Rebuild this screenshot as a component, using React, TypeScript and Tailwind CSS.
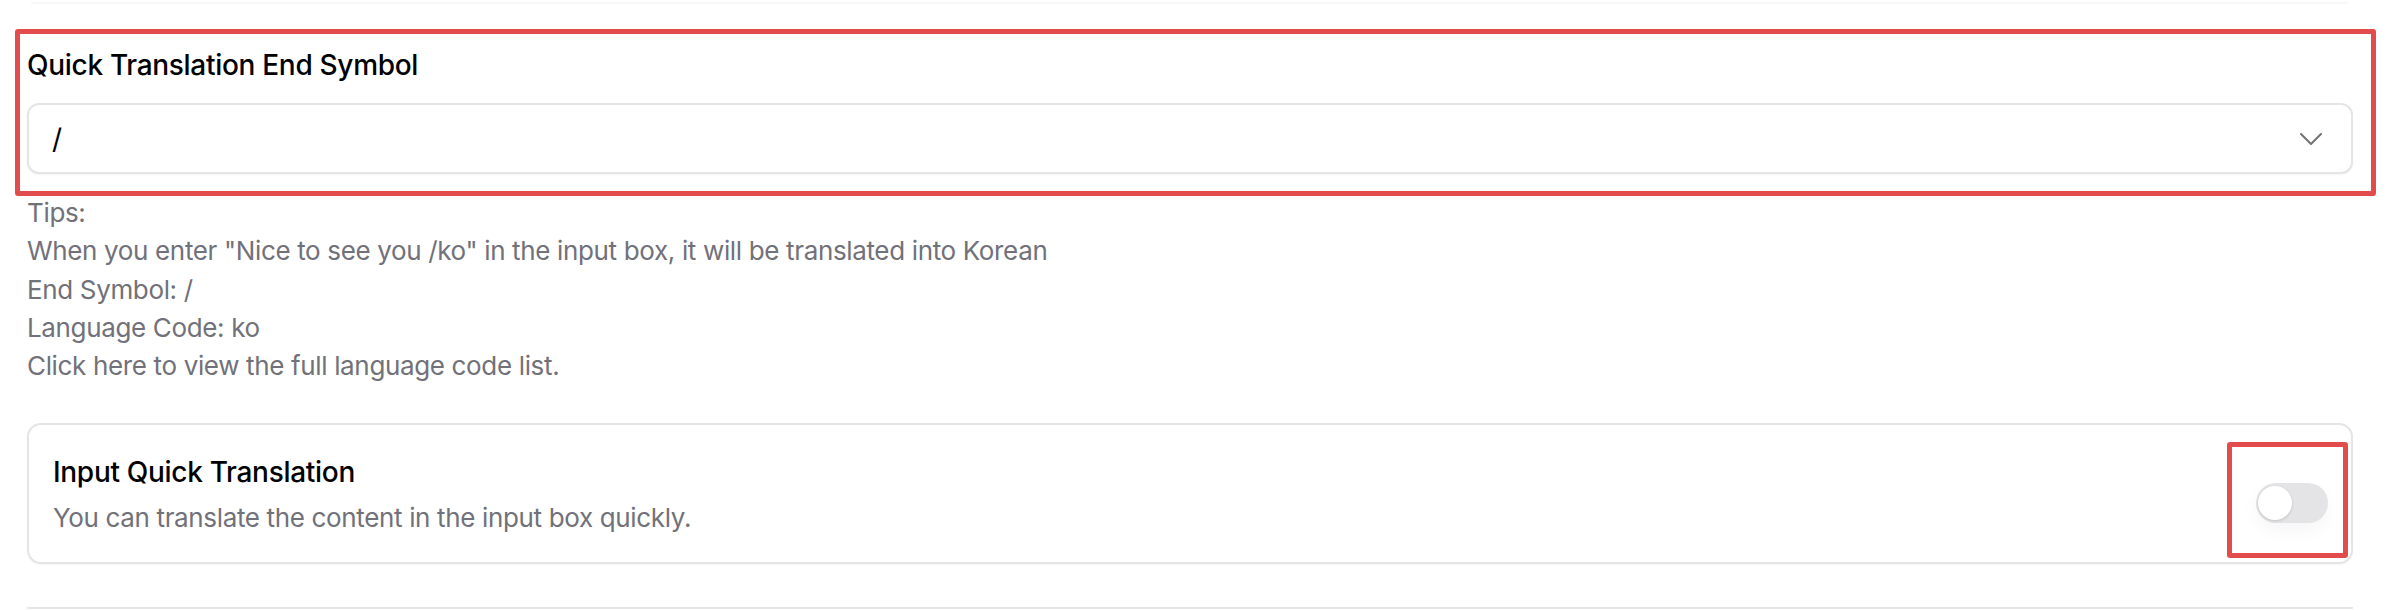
import React from "react";

const tips: string[] = [
  "Tips:",
  'When you enter "Nice to see you /ko" in the input box, it will be translated into Korean',
  "End Symbol: /",
  "Language Code: ko",
  "Click here to view the full language code list.",
];

const Toggle: React.FC = () => (
  <div className="relative mr-[23px] mt-[19px] shrink-0">
    {/* annotation frame */}
    <div className="pointer-events-none absolute -left-[29px] -right-[20px] -top-[41px] -bottom-[35px] rounded-[3px] border-[5px] border-[#e34c4c]" />
    <button
      type="button"
      aria-label="Input Quick Translation"
      className="flex h-[40px] w-[72px] items-center rounded-full bg-[#e4e4e7] px-[2px] shadow-[0_8px_18px_rgba(0,0,0,0.04)]"
    >
      <span className="block h-[34px] w-[34px] rounded-full bg-white shadow-[0_1px_3px_rgba(0,0,0,0.15)]" />
    </button>
  </div>
);

export default function App() {
  return (
    <div className="h-[610px] w-[2388px] overflow-hidden bg-white font-['Inter',sans-serif]">
      <div className="pl-[27px] pr-[35px]">
        {/* bottom edge of previous card */}
        <div className="mx-[4px] h-[2px] rounded-b-xl shadow-[0_1px_3px_rgba(0,0,0,0.07)]" />

        <section className="relative mt-[46px]">
          <div className="pointer-events-none absolute -left-[12px] -right-[23px] -top-[19px] -bottom-[22px] rounded-[3px] border-[5px] border-[#e34c4c]" />
          <h3 className="text-[28px] font-medium leading-[34px] tracking-[-0.3px] text-black">Quick Translation End Symbol</h3>
          <div className="mt-[21px] flex h-[71px] items-center justify-between rounded-[12px] border-2 border-[#e5e5e5] bg-white pl-[23px] pr-[29px] shadow-[0_1px_2px_rgba(0,0,0,0.04)]">
            <span className="text-[28px] leading-none text-black">/</span>
            <svg width="22" height="12" viewBox="0 0 22 12" fill="none" className="text-[#737373]">
              <path d="M1 1l10 10L21 1" stroke="currentColor" strokeWidth="2" strokeLinecap="round" strokeLinejoin="round" />
            </svg>
          </div>
        </section>

        <div className="mt-[20px] text-[26px] leading-[38.3px] tracking-[-0.35px] text-[#71717a]">
          {tips.map((t) => (
            <p key={t}>{t}</p>
          ))}
        </div>

        <div className="mt-[38px] flex h-[141px] items-center justify-between rounded-[14px] border-2 border-[#e5e5e5] bg-white shadow-[0_1px_2px_rgba(0,0,0,0.04)]">
          <div className="flex flex-col gap-[13px] pl-[24px] pt-[2px]">
            <span className="text-[28px] font-medium leading-[34px] tracking-[-0.3px] text-black">Input Quick Translation</span>
            <span className="text-[26px] leading-[32px] tracking-[-0.35px] text-[#71717a]">You can translate the content in the input box quickly.</span>
          </div>
          <Toggle />
        </div>

        <div className="mt-[43px] h-[2px] bg-[#e5e5e5]" />
      </div>
    </div>
  );
}
